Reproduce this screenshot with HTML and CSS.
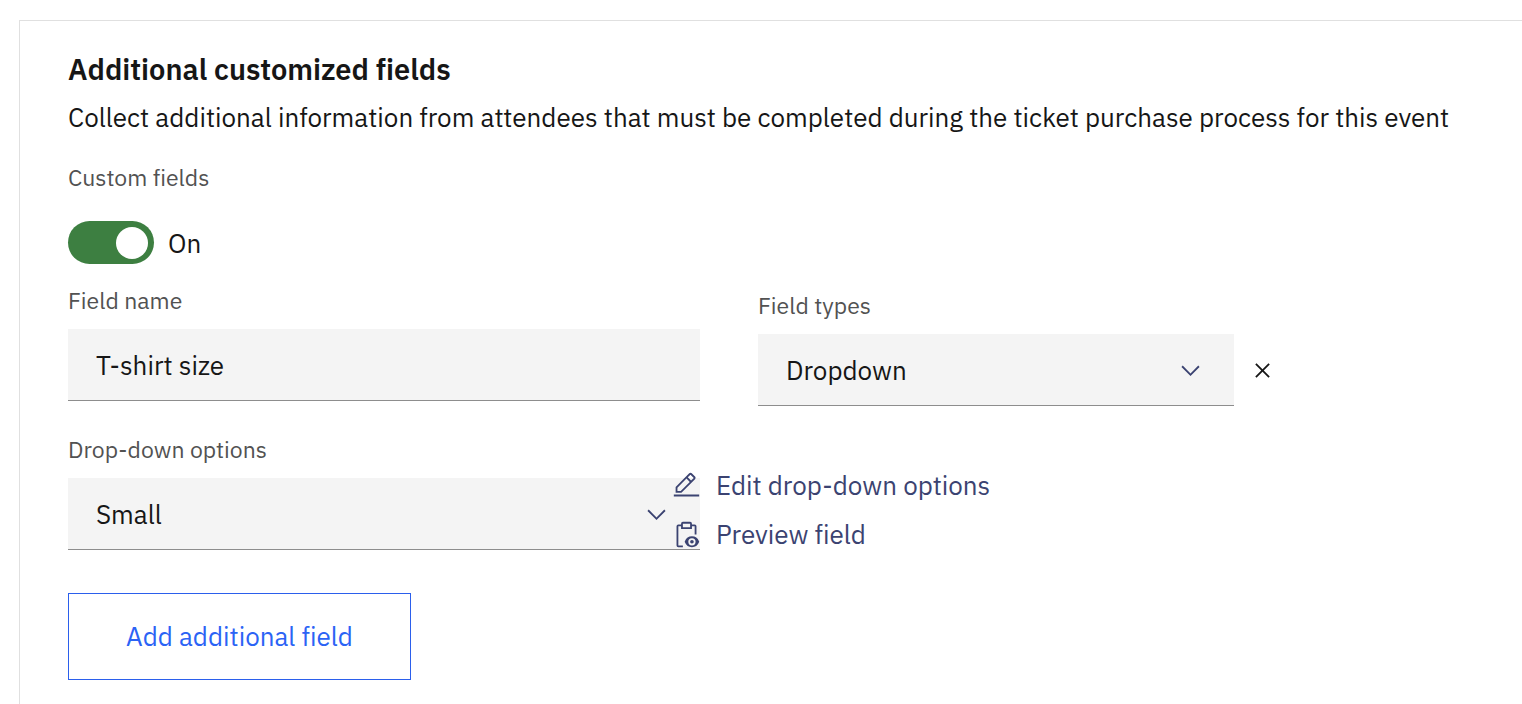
FILE: index.html
```html
<!DOCTYPE html>
<html lang="en">
<head>
<meta charset="utf-8">
<meta name="viewport" content="width=device-width, initial-scale=1">
<title>Additional customized fields</title>
<link rel="stylesheet" href="styles.css">
</head>
<body>
<main class="card">
  <header class="intro">
    <h1 class="title">Additional customized fields</h1>
    <p class="description">Collect additional information from attendees that must be completed during the ticket purchase process for this event</p>
  </header>

  <div class="toggle-group">
    <label class="label" for="custom-fields">Custom fields</label>
    <div class="toggle-row">
      <input class="toggle" type="checkbox" role="switch" id="custom-fields" checked>
      <span class="toggle-state">On</span>
    </div>
  </div>

  <div class="field-row">
    <div class="field">
      <label class="label" for="field-name">Field name</label>
      <input class="control" type="text" id="field-name" value="T-shirt size">
    </div>
    <div class="type-column">
      <div class="field type-field">
        <label class="label" for="field-type">Field types</label>
        <div class="select-wrap">
          <select class="control" id="field-type"><option>Dropdown</option></select>
          <svg class="icon chevron" viewBox="0 0 16 16" aria-hidden="true"><path d="M8 11L3 6l.7-.7L8 9.6l4.3-4.3.7.7z"/></svg>
        </div>
      </div>
      <button class="remove" type="button" aria-label="Remove field">
        <svg class="icon" viewBox="0 0 32 32" aria-hidden="true"><path d="M24 9.4L22.6 8 16 14.6 9.4 8 8 9.4l6.6 6.6L8 22.6 9.4 24l6.6-6.6 6.6 6.6 1.4-1.4-6.6-6.6z"/></svg>
      </button>
    </div>
  </div>

  <div class="field-row options-row">
    <div class="field">
      <label class="label" for="options">Drop-down options</label>
      <div class="select-wrap">
        <select class="control" id="options"><option>Small</option></select>
        <svg class="icon chevron" viewBox="0 0 16 16" aria-hidden="true"><path d="M8 11L3 6l.7-.7L8 9.6l4.3-4.3.7.7z"/></svg>
      </div>
    </div>
    <nav class="actions" aria-label="Field actions">
      <a class="action" href="#edit">
        <svg class="icon" viewBox="0 0 32 32" aria-hidden="true"><path d="M2 26h28v2H2zM25.4 9c.8-.8.8-2 0-2.8l-3.6-3.6c-.8-.8-2-.8-2.8 0l-15 15V24h6.4l15-15zm-5-5L24 7.6l-3 3L17.4 7l3-3zM6 22v-3.6l10-10 3.6 3.6-10 10H6z"/></svg>
        <span>Edit drop-down options</span>
      </a>
      <a class="action" href="#preview">
        <svg class="icon" viewBox="0 0 32 32" aria-hidden="true"><circle cx="22" cy="24" r="2"/><path d="M29.78 23.48A8.64 8.64 0 0 0 22 18a8.64 8.64 0 0 0-7.78 5.48L14 24l.22.52A8.64 8.64 0 0 0 22 30a8.64 8.64 0 0 0 7.78-5.48L30 24zM22 28a4 4 0 1 1 4-4 4 4 0 0 1-4 4z"/><path d="M12 28H7V7h3v3h12V7h3v9h2V7a2 2 0 0 0-2-2h-3V4a2 2 0 0 0-2-2h-8a2 2 0 0 0-2 2v1H7a2 2 0 0 0-2 2v21a2 2 0 0 0 2 2h5zM12 4h8v4h-8z"/></svg>
        <span>Preview field</span>
      </a>
    </nav>
  </div>

  <button class="add-button" type="button">Add additional field</button>
</main>
</body>
</html>
```
FILE: styles.css
```css
* { box-sizing: border-box; }

body {
  margin: 0;
  background: #fff;
  color: #161616;
  font-family: "IBM Plex Sans", "Noto Sans", sans-serif;
  font-size: 26px;
  font-variant-ligatures: none;
  line-height: 32px;
}

.card {
  min-height: calc(100vh - 20px);
  margin: 20px 0 0 19px;
  padding: 28px 48px 24px;
  border: solid #e0e0e0;
  border-width: 1px 0 0 1px;
}

.title {
  margin: 0;
  font-size: 29px;
  font-weight: 600;
  line-height: 40px;
}

.description { margin: 12px 0 0; }

.label {
  display: block;
  margin-bottom: 13px;
  color: #525252;
  font-size: 23px;
  line-height: 32px;
}

.toggle-group { margin-top: 28px; }

.toggle-row {
  display: flex;
  align-items: center;
  gap: 14px;
  margin-top: 28px;
}

.toggle {
  appearance: none;
  display: flex;
  align-items: center;
  width: 86px;
  height: 43px;
  margin: 0;
  padding: 6px;
  border-radius: 22px;
  background: #8d8d8d;
}

.toggle::before {
  content: "";
  width: 32px;
  height: 32px;
  border-radius: 50%;
  background: #fff;
}

.toggle:checked {
  justify-content: flex-end;
  background: #3d7f41;
}

.field-row {
  display: grid;
  grid-template-columns: 632fr 716fr;
  column-gap: 58px;
  margin-top: 20px;
}

.type-column {
  display: flex;
  align-items: flex-end;
  gap: 14px;
  padding-top: 5px;
}

.type-field { flex: 0 1 476px; }

.select-wrap { position: relative; }

.control {
  appearance: none;
  display: block;
  width: 100%;
  height: 72px;
  padding: 0 28px;
  border: 0;
  border-bottom: 1px solid #8d8d8d;
  border-radius: 0;
  background: #f4f4f4;
  color: inherit;
  font: inherit;
}

.icon {
  display: block;
  flex: none;
  width: 29px;
  height: 29px;
  fill: currentColor;
}

.chevron {
  position: absolute;
  top: 22px;
  right: 29px;
  color: #3b4371;
  pointer-events: none;
}

.remove {
  display: flex;
  align-items: center;
  height: 72px;
  padding: 0;
  border: 0;
  background: none;
  color: #161616;
}

.options-row { margin-top: 27px; }

.actions {
  z-index: 1;
  display: flex;
  flex-direction: column;
  gap: 17px;
  margin-left: -86px;
  padding-top: 36px;
}

.action {
  display: flex;
  align-items: center;
  gap: 15px;
  color: #3b4371;
  text-decoration: none;
}

.add-button {
  margin-top: 43px;
  padding: 26px 57px 27px;
  border: 1px solid #2b5fec;
  background: none;
  color: #2b63f5;
  font: inherit;
}
```
